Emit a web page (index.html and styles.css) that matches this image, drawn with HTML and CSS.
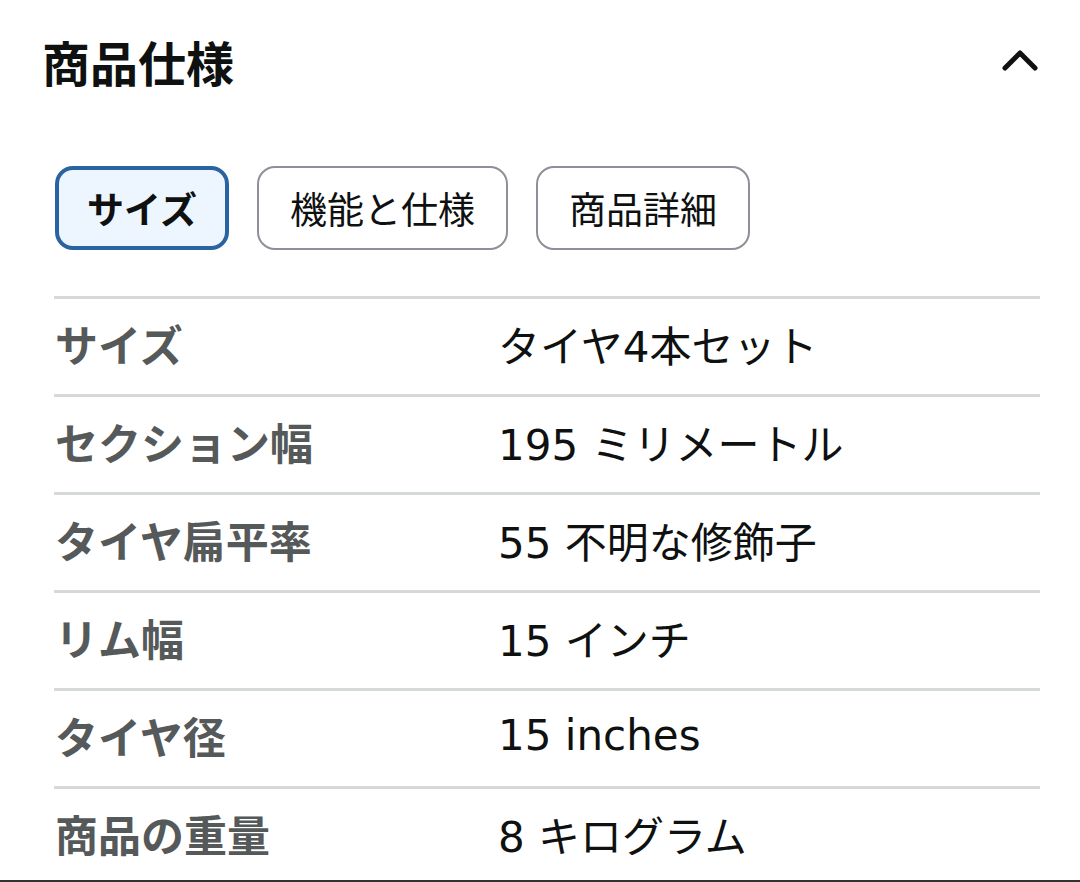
FILE: index.html
```html
<!DOCTYPE html>
<html lang="ja">
<head>
<meta charset="utf-8">
<link rel="stylesheet" href="styles.css">
</head>
<body>
<div class="page">
  <div class="header">
    <h2 class="title">商品仕様</h2>
    <svg class="chev" width="40" height="24" viewBox="0 0 40 24"><path d="M5 20 L20 5 L35 20" fill="none" stroke="#111" stroke-width="5" stroke-linecap="round" stroke-linejoin="round"/></svg>
  </div>
  <div class="tabs">
    <div class="tab active">サイズ</div>
    <div class="tab">機能と仕様</div>
    <div class="tab">商品詳細</div>
  </div>
  <div class="table">
    <div class="row"><div class="label">サイズ</div><div class="value">タイヤ4本セット</div></div>
    <div class="row"><div class="label">セクション幅</div><div class="value">195 ミリメートル</div></div>
    <div class="row"><div class="label">タイヤ扁平率</div><div class="value">55 不明な修飾子</div></div>
    <div class="row"><div class="label">リム幅</div><div class="value">15 インチ</div></div>
    <div class="row"><div class="label">タイヤ径</div><div class="value">15 inches</div></div>
    <div class="row"><div class="label">商品の重量</div><div class="value">8 キログラム</div></div>
  </div>
</div>
</body>
</html>
```
FILE: styles.css
```css
html, body { margin: 0; padding: 0; background: #fff; }
body { font-family: "Noto Sans CJK JP", "Noto Sans", sans-serif; color: #0f1111; width: 1080px; height: 882px; overflow: hidden; }
.page { height: 880px; border-bottom: 2px solid #333; box-sizing: content-box; display: flex; flex-direction: column; }
.header { display: flex; align-items: center; justify-content: space-between; padding: 29px 40px 0 42px; height: 64px; }
.title { margin: 0; font-size: 48px; font-weight: 700; line-height: 64px; color: #0f1111; }
.chev { margin-top: -2px; }
.tabs { display: flex; gap: 28px; padding: 73px 0 0 55px; }
.tab { height: 84px; box-sizing: border-box; border: 2px solid #8d9096; border-radius: 18px; padding: 0 31px; display: flex; align-items: center; font-size: 37px; color: #0f1111; background: #fff; }
.tab.active { border: 4px solid #2a63a2; background: #edf6ff; font-weight: 700; padding: 0 28px; }
.table { margin: 46px 40px 0 54px; }
.row { display: flex; align-items: center; height: 95px; border-top: 3px solid #d5d9d9; padding-bottom: 0; box-sizing: content-box; }
.label, .value { margin-top: -7px; }
.label { width: 443px; padding-left: 1px; font-size: 43px; font-weight: 700; color: #565959; }
.value { font-family: "DejaVu Sans", "Noto Sans CJK JP", sans-serif; font-size: 42px; color: #0f1111; }
```
